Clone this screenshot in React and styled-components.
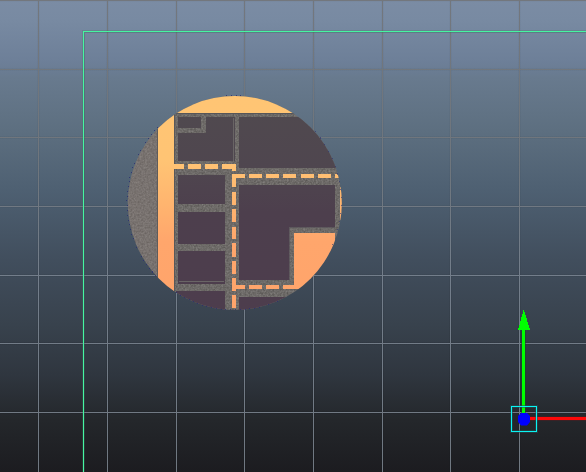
import React from 'react';
import styled, { createGlobalStyle } from 'styled-components';

const GlobalStyle = createGlobalStyle`
  body { margin: 0; overflow: hidden; background: #1c1c20; }
`;

const Viewport = styled.main`
  position: relative;
  width: 586px;
  height: 472px;
  overflow: hidden;
  background: linear-gradient(
    #7b8ca4 0px, #788aa2 20px, #6d7f98 62px, #687a8e 78px, #5d6f80 130px,
    #4e6072 190px, #414e5d 260px, #38424d 325px, #2f363f 375px,
    #24272b 420px, #1c1c20 472px
  );
`;

const GridLines = styled.svg`
  display: block;
  width: 586px;
  height: 472px;
`;

const CameraGate = styled.div`
  position: absolute;
  left: 83px;
  top: 31px;
  width: 540px;
  height: 480px;
  border: 1px solid #46f5a2;
  outline: 1px solid rgba(60, 125, 95, 0.25);
  box-shadow: inset 0 0 0 1px rgba(45, 110, 80, 0.35);
`;

const MapLens = styled.svg`
  position: absolute;
  left: 120px;
  top: 90px;
  width: 230px;
  height: 226px;
`;

const Gizmo = styled.svg`
  position: absolute;
  left: 500px;
  top: 300px;
  width: 86px;
  height: 172px;
`;

const columns = [38, 107, 176, 244, 313, 382, 450, 519];
const rows = [0, 69, 137, 206, 275, 343, 412];

const rooms = [
  'M178 117H201V128H178Z',
  'M206 117H235V161H178V133H206Z',
  'M239 117H345V168H239Z',
  'M178 175H225V204H178Z',
  'M178 212H225V244H178Z',
  'M178 251H225V284H178Z',
  'M176 291H225V312H176Z',
  'M239 185H335V227H289V280H239Z',
  'M239 297H300V312H239Z',
];

// Lane markings as [x, y, width, height]
const lanes = [
  [174, 164, 10, 5], [188, 164, 13, 5], [205, 164, 13, 5], [222, 164, 14, 5], [232, 169, 4, 2],
  [232, 174, 13, 4], [249, 174, 13, 4], [266, 174, 13, 4], [283, 174, 13, 4],
  [301, 174, 13, 4], [318, 174, 13, 4], [335, 174, 4, 4],
  [232, 178, 4, 9], [232, 192, 4, 13], [232, 209, 4, 13], [232, 227, 4, 12],
  [232, 243, 4, 14], [232, 261, 4, 13], [232, 278, 4, 13], [232, 295, 4, 13],
  [236, 285, 9, 4], [249, 285, 13, 4], [266, 285, 13, 4], [283, 285, 15, 4],
];

function ViewportGrid() {
  return (
    <GridLines viewBox="0 0 586 472" shapeRendering="crispEdges" aria-hidden="true">
      <defs>
        <linearGradient id="gridInk" gradientUnits="userSpaceOnUse" x1="0" y1="0" x2="0" y2="472">
          <stop offset="0" stopColor="#73777d" />
          <stop offset=".36" stopColor="#6f767d" />
          <stop offset=".58" stopColor="#737e8b" />
          <stop offset="1" stopColor="#707881" />
        </linearGradient>
        <linearGradient id="gridHalo" gradientUnits="userSpaceOnUse" x1="0" y1="0" x2="0" y2="472">
          <stop offset="0" stopColor="#303a48" stopOpacity=".04" />
          <stop offset=".5" stopColor="#252c35" stopOpacity=".08" />
          <stop offset="1" stopColor="#15181c" stopOpacity=".25" />
        </linearGradient>
      </defs>
      {columns.map((x) => <rect key={`s${x}`} x={x - 1} y="0" width="3" height="472" fill="url(#gridHalo)" />)}
      {rows.map((y) => <rect key={`t${y}`} x="0" y={y - 1} width="586" height="3" fill="url(#gridHalo)" />)}
      {columns.map((x) => <rect key={x} x={x} y="0" width="1" height="472" fill="url(#gridInk)" />)}
      {rows.map((y) => <rect key={`r${y}`} x="0" y={y} width="586" height="1" fill="url(#gridInk)" />)}
    </GridLines>
  );
}

function CityMap() {
  return (
    <MapLens viewBox="120 90 230 226" shapeRendering="crispEdges" aria-label="Map">
      <defs>
        <clipPath id="lens"><circle cx="234.8" cy="203" r="107" /></clipPath>
        <linearGradient id="sand" gradientUnits="userSpaceOnUse" x1="0" y1="95" x2="0" y2="310">
          <stop offset="0" stopColor="#ffc574" />
          <stop offset=".3" stopColor="#ffc474" />
          <stop offset=".5" stopColor="#ffb56f" />
          <stop offset=".68" stopColor="#ffa66c" />
          <stop offset="1" stopColor="#ffa46b" />
        </linearGradient>
        <linearGradient id="room" gradientUnits="userSpaceOnUse" x1="0" y1="115" x2="0" y2="310">
          <stop offset="0" stopColor="#50494f" />
          <stop offset=".27" stopColor="#4f464f" />
          <stop offset=".5" stopColor="#4d3f4d" />
          <stop offset="1" stopColor="#4d3d4d" />
        </linearGradient>
        <filter id="grain" x="0" y="0" width="1" height="1" colorInterpolationFilters="sRGB">
          <feTurbulence type="fractalNoise" baseFrequency=".55" numOctaves="2" seed="8" />
          <feColorMatrix values=".22 0 0 0 .318  .22 0 0 0 .306  .22 0 0 0 .296  0 0 0 0 1" />
        </filter>
      </defs>
      <g clipPath="url(#lens)">
        <rect x="120" y="90" width="230" height="226" filter="url(#grain)" />
        <rect x="120" y="120" width="38" height="190" fill="#9a8b88" opacity=".25" />
        <rect x="158" y="90" width="192" height="23" fill="url(#sand)" />
        <rect x="158" y="90" width="16" height="226" fill="url(#sand)" />
        <rect x="157" y="118" width="1" height="170" fill="#5f5c5c" />
        <rect x="174" y="113" width="1" height="197" fill="#59585a" />
        <rect x="174" y="113" width="140" height="1" fill="#565659" />
        {rooms.map((d) => <path key={d} d={d} fill="url(#room)" />)}
        <path d="M233.5 118V161M178.5 281.5H224" fill="none" stroke="#696565" />
        <path d="M289 227.5H335M289.5 228V280" fill="none" stroke="#59535a" opacity=".7" />
        <path d="M294 233H335V250H350V289H294Z" fill="url(#sand)" />
        <rect x="340" y="187" width="4" height="33" fill="url(#sand)" />
        {lanes.map(([x, y, w, h]) => <rect key={`${x}-${y}`} x={x} y={y} width={w} height={h} fill="url(#sand)" />)}
      </g>
      <path d="M226 95.6A107.4 107.4 0 0 1 241 95.6M158 127A107.4 107.4 0 0 0 157 277M176 292.5A107.4 107.4 0 0 0 286 297"
        fill="none" stroke="#2b2e72" strokeDasharray="1 3.8" opacity=".8" />
      <path d="M332 245A107.4 107.4 0 0 0 311 127" fill="none" stroke="#2b2e72" strokeDasharray="1 7" opacity=".6" />
    </MapLens>
  );
}

function TransformGizmo() {
  return (
    <Gizmo viewBox="500 300 86 172" aria-label="Transform manipulator">
      <g shapeRendering="crispEdges">
        <rect x="521" y="330" width="5" height="84" fill="#174527" opacity=".55" />
        <rect x="522" y="329" width="3" height="84" fill="#00ff00" />
        <rect x="530" y="416" width="56" height="5" fill="#521b20" opacity=".5" />
        <rect x="530" y="417" width="56" height="3" fill="#ff0909" />
        <path d="M523.5 310H524L530 330H518Z" fill="#00ff00" />
        <rect x="511.5" y="406.5" width="25" height="25" fill="none" stroke="#205556" strokeWidth="3" opacity=".5" />
        <rect x="511.5" y="406.5" width="25" height="25" fill="none" stroke="#0af4f4" />
      </g>
      <path d="M521 413H527L530 416V422L527 425.5H521L518 422V416Z" fill="#0000ff" />
    </Gizmo>
  );
}

export default function App() {
  return (
    <>
      <GlobalStyle />
      <Viewport>
        <ViewportGrid />
        <CameraGate />
        <CityMap />
        <TransformGizmo />
      </Viewport>
    </>
  );
}
